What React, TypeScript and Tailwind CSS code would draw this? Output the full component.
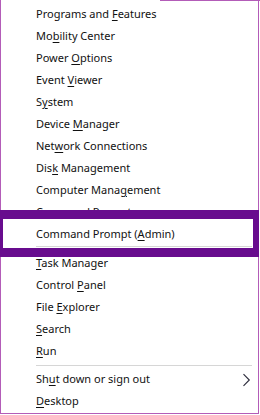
import React from 'react';

type Item = { pre: string; key: string; post: string; arrow?: boolean };

const groupA: Item[] = [
  { pre: 'Programs and ', key: 'F', post: 'eatures' },
  { pre: 'Mo', key: 'b', post: 'ility Center' },
  { pre: 'Power ', key: 'O', post: 'ptions' },
  { pre: 'Event ', key: 'V', post: 'iewer' },
  { pre: 'S', key: 'y', post: 'stem' },
  { pre: 'Device ', key: 'M', post: 'anager' },
  { pre: 'Net', key: 'w', post: 'ork Connections' },
  { pre: 'Dis', key: 'k', post: ' Management' },
  { pre: 'Computer Mana', key: 'g', post: 'ement' },
  { pre: 'Command ', key: 'P', post: 'rompt' },
  { pre: 'Command Prompt (', key: 'A', post: 'dmin)' },
];

const groupB: Item[] = [
  { pre: '', key: 'T', post: 'ask Manager' },
  { pre: 'Control ', key: 'P', post: 'anel' },
  { pre: 'File ', key: 'E', post: 'xplorer' },
  { pre: '', key: 'S', post: 'earch' },
  { pre: '', key: 'R', post: 'un' },
];

const groupC: Item[] = [
  { pre: 'Sh', key: 'u', post: 't down or sign out', arrow: true },
  { pre: '', key: 'D', post: 'esktop' },
];

const Row = ({ item }: { item: Item }) => (
  <div className="relative flex h-[22px] items-center pl-[35px] text-[11px] text-[#111]">
    <span>
      {item.pre}
      <span className="underline decoration-1 underline-offset-[2px]">{item.key}</span>
      {item.post}
    </span>
    {item.arrow && (
      <svg className="absolute left-[241px] top-[5px]" width="9" height="14" viewBox="0 0 9 14">
        <polyline points="1.5,1.2 7.3,7 1.5,12.8" fill="none" stroke="#2a2a3a" strokeWidth="1.1" />
      </svg>
    )}
  </div>
);

export default function App() {
  return (
    <div
      className="relative h-[415px] w-[260px] overflow-hidden bg-white"
      style={{ fontFamily: '"Noto Sans", "Open Sans", sans-serif' }}
    >
      <div className="h-[414px] w-[259px] border-b border-l border-r border-[#b35cb8] pt-[3px]">
        {groupA.map((it) => (
          <Row key={it.pre + it.key} item={it} />
        ))}
        <div className="pb-[5px] pl-[35px] pr-[6px] pt-[1px]">
          <div className="h-px bg-[#d6d6d6]" />
        </div>
        {groupB.map((it) => (
          <Row key={it.pre + it.key} item={it} />
        ))}
        <div className="pb-[2px] pl-[35px] pr-[6px] pt-[3px]">
          <div className="h-px bg-[#d6d6d6]" />
        </div>
        {groupC.map((it) => (
          <Row key={it.pre + it.key} item={it} />
        ))}
      </div>

      {/* top edge of the menu frame */}
      <div className="absolute right-0 top-0 h-px w-[100px] bg-[#b35cb8]" />

      {/* highlight box round Command Prompt (Admin) */}
      <div className="absolute left-0 top-[210px] h-[47px] w-[259px] border-b-[9px] border-l-[3px] border-r-[6px] border-t-[9px] border-[#680c8e]" />
    </div>
  );
}
